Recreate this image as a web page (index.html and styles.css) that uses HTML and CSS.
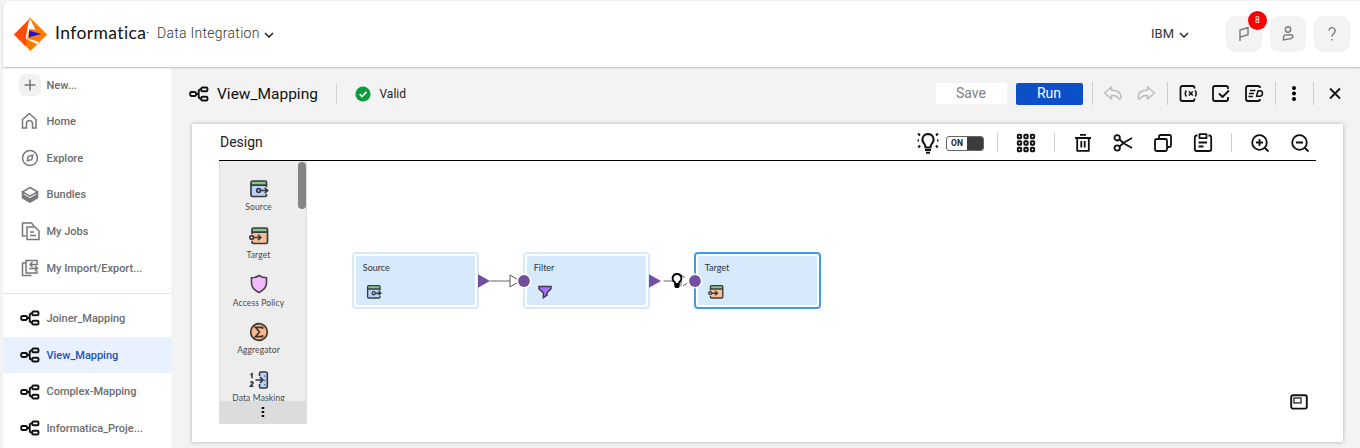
FILE: index.html
```html
<!DOCTYPE html>
<html lang="en">
<head>
<meta charset="utf-8">
<title>Data Integration</title>
<link rel="stylesheet" href="styles.css">
</head>
<body>
<svg class="defs" aria-hidden="true">
  <symbol id="mapping" viewBox="0 0 20 16"><g fill="none" stroke="currentColor" stroke-width="1.9"><rect x="1.200" y="6" width="5.800" height="4" rx="1.200"/><rect x="12.200" y="1.500" width="6.300" height="3.800" rx="1.300"/><rect x="12.200" y="10.700" width="6.300" height="3.800" rx="1.300"/><path d="M7 8h2.700M12 3.400h-.3q-2 0-2 2v5.200q0 2 2 2h.3"/></g></symbol>
  <symbol id="source" viewBox="0 0 20 20"><rect x="2" y="2" width="15.500" height="15.500" rx="2" fill="#b9d2f8"/><path d="M2 6V3.500Q2 2 3.500 2H16q1.500 0 1.500 1.500V6z" fill="#83c983"/><g fill="none" stroke="#383b40" stroke-width="1.700"><path d="M17.500 8V3.500Q17.500 2 16 2H3.500Q2 2 2 3.500V16q0 1.500 1.500 1.500H16q1.500 0 1.500-1.500v-1M2 6.200h15.500M11.500 11.500h7M15.800 8.800l2.800 2.700-2.800 2.700"/><circle cx="9.600" cy="11.500" r="1.900"/></g></symbol>
  <symbol id="target" viewBox="0 0 20 20"><rect x="3" y="2" width="15.500" height="15.500" rx="2" fill="#f9bd94"/><path d="M3 6V3.500Q3 2 4.500 2H17q1.500 0 1.500 1.500V6z" fill="#83c983"/><g fill="none" stroke="#383b40" stroke-width="1.700"><path d="M3 8V3.500Q3 2 4.500 2H17q1.500 0 1.500 1.500V16q0 1.500-1.500 1.500H4.500Q3 17.500 3 16v-1M3 6.200h15.500M4.500 11.500h7M9 8.800l2.800 2.700L9 14.200"/><circle cx="2.700" cy="11.500" r="1.800"/></g></symbol>
  <symbol id="bulb" viewBox="0 0 12 16"><path d="M6 1a4.300 4.300 0 0 0-2.700 7.700q.9.900.9 2.300h3.600q0-1.400.9-2.300A4.300 4.300 0 0 0 6 1z" fill="#fff" stroke="#000" stroke-width="1.800"/><path d="M3.400 11h5.200v2.500L7.500 15h-3l-1.100-1.500z"/></symbol>
</svg>

<header class="header">
  <svg class="logo" viewBox="0 0 34 34"><path d="M17 0L34 17 17 34 0 17z" fill="#ff7a00"/><path d="M17 0L0 17l12 12 4-29z" fill="#ff4b0b"/><path d="M17 1l5 11-6-1-2.500 10L25.500 24.500 24 27 12 21 15 4z" fill="#fff"/><path d="M15.500 13L28 16.500 15.500 19.800z" fill="#1b13df"/></svg>
  <span class="brand">Informatica<span class="mark">·</span></span>
  <span class="product">Data Integration</span>
  <svg class="chevron" viewBox="0 0 10 6"><path d="M1 1l4 4 4-4"/></svg>
  <span class="org">IBM</span>
  <svg class="chevron" viewBox="0 0 10 6"><path d="M1 1l4 4 4-4"/></svg>
  <div class="actions">
    <div class="action"><svg viewBox="0 0 20 20"><path d="M6 17V6l8-2.500v7.200L6 13.200"/></svg><span class="badge">8</span></div>
    <div class="action"><svg viewBox="0 0 20 20"><circle cx="10" cy="5.500" r="2.700"/><path d="M5.500 16v-2.500q0-2.300 2.500-2.600l4.500-.3q2.500 0 2.300 2-.2 1.400-1.800 2z"/></svg></div>
    <div class="action"><svg viewBox="0 0 20 20"><path d="M7 6.300a3.100 3.100 0 1 1 5.200 2.700Q10 10.500 10 12.700M10 15v1.600"/></svg></div>
  </div>
</header>

<div class="body">
  <nav class="sidebar">
    <div class="side-group">
      <div class="item"><span class="plus"><svg viewBox="0 0 20 20"><path d="M10 4.500v11M4.500 10h11"/></svg></span>New...</div>
      <div class="item"><svg viewBox="0 0 20 20"><path d="M2.500 17V8.500L9.300 2.500l6.700 6V17h-3.500v-4.500a3 3 0 0 0-6 0V17z"/></svg>Home</div>
      <div class="item"><svg viewBox="0 0 20 20"><circle cx="10" cy="10" r="7.500"/><path d="M7.300 12.700l1-4.400 4.400-1-1 4.400z"/></svg>Explore</div>
      <div class="item"><svg viewBox="0 0 20 20"><path d="M10 2.500l7.500 4.300L10 11.200 2.500 6.800zM2.500 7v2.600l7.500 4.300 7.500-4.300V7M2.500 9.600v3.200l7.500 4.400 7.500-4.400V9.600M2.500 11.200l7.500 4.300 7.500-4.300"/></svg>Bundles</div>
      <div class="item"><svg viewBox="0 0 20 20"><path d="M6 15H2.500V2h9l2.500 3M7 6h8l4 4v8.500H7zM10 11h4M10 14.500h6"/></svg>My Jobs</div>
      <div class="item"><svg viewBox="0 0 20 20"><path d="M5.500 5h-3v12.500h9M17 5.500V2.500H6v12.500h11v-2M9.500 6.500H18M12.500 4L10 6.500 12.500 9M9 10.500h8.500M15 8l2.500 2.500L15 13"/></svg>My Import/Export...</div>
    </div>
    <div class="side-group recent">
      <div class="item"><svg class="map-icon"><use href="#mapping"/></svg>Joiner_Mapping</div>
      <div class="item selected"><svg class="map-icon"><use href="#mapping"/></svg>View_Mapping</div>
      <div class="item"><svg class="map-icon"><use href="#mapping"/></svg>Complex-Mapping</div>
      <div class="item"><svg class="map-icon"><use href="#mapping"/></svg>Informatica_Proje...</div>
    </div>
  </nav>

  <main class="main">
    <div class="titlebar">
      <svg class="map-icon"><use href="#mapping"/></svg>
      <h1 class="title">View_Mapping</h1>
      <i class="title-divider"></i>
      <svg class="valid-icon" viewBox="0 0 16 16"><circle cx="8" cy="8" r="7.600" fill="#0b9b3c"/><path d="M4.700 8.200l2.300 2.300 4.500-4.600" fill="none" stroke="#fff" stroke-width="1.700"/></svg>
      <span class="valid">Valid</span>
      <button class="btn save">Save</button>
      <button class="btn run">Run</button>
      <div class="tools">
        <i class="divider"></i>
        <svg class="tool muted" viewBox="0 0 20 20"><path d="M8.500 3L1.500 9l7 6v-3.500q5.500-.5 8 4 1.500-1 1.500-3-.5-6-9.500-6.500z"/></svg>
        <svg class="tool muted" viewBox="0 0 20 20"><path d="M11.500 3l7 6-7 6v-3.500q-5.500-.5-8 4-1.500-1-1.500-3 .5-6 9.500-6.500z"/></svg>
        <i class="divider"></i>
        <svg class="tool" viewBox="0 0 20 20"><path d="M16.500 4.500V4q0-2-2-2H4.500q-2 0-2 2v11q0 2 2 2h10q2 0 2-2v-.5"/><path class="thin" d="M8.300 6.500q-2 3 0 6M17.200 6.500q2 3 0 6M10.800 7.500l4 4M14.800 7.500l-4 4"/></svg>
        <svg class="tool" viewBox="0 0 20 20"><path d="M17 5V4q0-2-2-2H4Q2 2 2 4v11q0 2 2 2h11q2 0 2-2v-2M8 9.500l3.500 3.500 6.500-6.500"/></svg>
        <svg class="tool" viewBox="0 0 20 20"><path d="M16 4q0-2-2-2H4Q2 2 2 4v11q0 2 2 2h10q2 0 2-2"/><path class="thin" d="M6 6.500h5.500M5 9.500h5M4.500 12.500h4.500M14 6.800H16q2.500 0 2.500 2.700T15.500 12.300h-3z"/></svg>
        <i class="divider"></i>
        <svg class="tool dots" viewBox="0 0 20 20"><circle cx="10" cy="4" r="2"/><circle cx="10" cy="9.500" r="2"/><circle cx="10" cy="15" r="2"/></svg>
        <i class="divider"></i>
        <svg class="tool close" viewBox="0 0 20 20"><path d="M5 4.500l10 10M15 4.500L5 14.500"/></svg>
      </div>
    </div>

    <section class="panel">
      <div class="panel-head">
        <h2 class="panel-title">Design</h2>
        <svg class="hint" viewBox="0 0 22 22"><path d="M11 2a5.600 5.600 0 0 0-4 9.500Q8.500 13 8.500 15.500h5q0-2.500 1.500-4A5.600 5.600 0 0 0 11 2zM8 18h6M9 20.800h4M1 1.500l2 2M21 1.500l-2 2M.5 8.500H2M20 8.500h1.500M1.200 15.500l2-2M20.800 15.500l-2-2"/></svg>
        <span class="toggle"><b class="toggle-text">ON</b><i class="knob"></i></span>
        <div class="tools wide">
          <i class="divider"></i>
          <svg class="tool grid-icon" viewBox="0 0 20 20"><rect x="1.800" y="1.800" width="3.400" height="3.400" rx=".8"/><rect x="8.300" y="1.800" width="3.400" height="3.400" rx=".8"/><rect x="14.800" y="1.800" width="3.400" height="3.400" rx=".8"/><rect x="1.800" y="8.300" width="3.400" height="3.400" rx=".8"/><rect x="8.300" y="8.300" width="3.400" height="3.400" rx=".8"/><rect x="14.800" y="8.300" width="3.400" height="3.400" rx=".8"/><rect x="1.800" y="14.800" width="3.400" height="3.400" rx=".8"/><rect x="8.300" y="14.800" width="3.400" height="3.400" rx=".8"/><rect x="14.800" y="14.800" width="3.400" height="3.400" rx=".8"/></svg>
          <i class="divider"></i>
          <svg class="tool" viewBox="0 0 20 20"><path d="M7 1.800h6M2 5h16M4.200 5v12.800h11.600V5M8.300 8v6.500M11.700 8v6.500"/></svg>
          <svg class="tool" viewBox="0 0 20 20"><circle cx="4.200" cy="4.800" r="2.700"/><circle cx="4.200" cy="15" r="2.700"/><path d="M6.500 6.500l4.500 4 8 4.500M6.500 13.500L11 9.500l8-4.500"/></svg>
          <svg class="tool" viewBox="0 0 20 20"><rect x="2" y="6" width="12" height="12" rx="1.500"/><path d="M6 5.500V3.500Q6 2 7.500 2h9Q18 2 18 3.500v9q0 1.500-1.500 1.500H14.500"/></svg>
          <svg class="tool" viewBox="0 0 20 20"><path d="M4.500 2.500H3.500Q1.800 2.500 1.800 4.500V16q0 2 2 2h12.400q2 0 2-2V4.500q0-2-1.700-2h-1M6.500 1.200h7v4h-7zM5.500 9.500h8.500M5.500 13.500h5"/></svg>
          <i class="divider"></i>
          <svg class="tool" viewBox="0 0 20 20"><circle cx="9.500" cy="9.500" r="7.300"/><path d="M15 15l3.500 3.500M9.500 6v7M6 9.500h7"/></svg>
          <svg class="tool" viewBox="0 0 20 20"><circle cx="9.500" cy="9.500" r="7.300"/><path d="M15 15l3.500 3.500M6 9.500h7"/></svg>
        </div>
      </div>
      <div class="workspace">
        <aside class="palette">
          <div class="palette-list">
            <div class="entry"><svg><use href="#source"/></svg>Source</div>
            <div class="entry"><svg><use href="#target"/></svg>Target</div>
            <div class="entry"><svg viewBox="0 0 20 20"><path d="M10 1.500q3.500 2.300 7.500 2.300v5q0 6-7.500 9.700Q2.500 14.800 2.500 8.800v-5q4 0 7.500-2.300z" fill="#f3bafb" stroke="#444" stroke-width="1.600"/></svg>Access Policy</div>
            <div class="entry"><svg viewBox="0 0 20 20"><circle cx="10" cy="10" r="8.300" fill="#f9b68d" stroke="#41362f" stroke-width="1.700"/><path d="M13.500 7V5.300h-7l4 4.700-4 4.700h7V13" fill="none" stroke="#41362f" stroke-width="1.700"/></svg>Aggregator</div>
            <div class="entry"><svg viewBox="0 0 20 20"><rect x="10.500" y="2" width="7.800" height="16" rx="1.500" fill="#b9d2f8"/><path d="M10.500 6V3.500q0-1.500 1.500-1.500h4.800q1.500 0 1.500 1.500v13q0 1.500-1.500 1.500H12q-1.500 0-1.500-1.500V14M6.500 10h7M11 7l3 3-3 3M1.500 4.800l1.500-1v4.500M1.300 12.500q2.700-1.700 2.700.5L1.500 16.200H4.500" fill="none" stroke="#353b45" stroke-width="1.600"/><path d="M15.800 5.500v10" stroke="#353b45" stroke-dasharray="1.300 3"/></svg>Data Masking</div>
          </div>
          <i class="scroll-thumb"></i>
          <div class="palette-foot"><svg viewBox="0 0 4 12"><path d="M.7 1h2.500v2H.7zM.7 5h2.500v2H.7zM.7 9h2.500v2H.7z"/></svg></div>
        </aside>
        <div class="canvas">
          <div class="node node-source"><div class="node-body"><span>Source</span><svg><use href="#source"/></svg></div></div>
          <div class="node node-filter"><div class="node-body"><span>Filter</span><svg viewBox="0 0 20 20"><path d="M2.500 3h15v3L12.500 11v3L8 17v-6L2.500 6z" fill="#a970fb" stroke="#403b4a" stroke-width="1.900"/></svg></div></div>
          <div class="node node-target"><div class="node-body"><span>Target</span><svg><use href="#target"/></svg></div></div>
          <svg class="link link-a" viewBox="0 0 56 18"><path d="M13 9h20" stroke="#666"/><path d="M33 3l10 6-10 6z" fill="#fff" stroke="#555"/><path d="M1 2.300L13 9 1 15.700z" fill="#71509f"/><circle cx="47" cy="9" r="7.500" fill="#fff"/><circle cx="47" cy="9" r="5.900" fill="#71509f"/></svg>
          <svg class="link link-b" viewBox="0 0 56 18"><path d="M15.500 9h17" stroke="#666"/><path d="M33 3l10 6-10 6z" fill="#fff" stroke="#666" stroke-dasharray="5 3"/><path d="M1 2.300L13 9 1 15.700z" fill="#71509f"/><circle cx="47" cy="9" r="7.500" fill="#fff"/><circle cx="47" cy="9" r="5.900" fill="#71509f"/></svg>
          <svg class="link-bulb"><use href="#bulb"/></svg>
          <svg class="overview" viewBox="0 0 18 16"><rect x="1.200" y="1.200" width="15.600" height="13.400" rx="1.800" fill="none" stroke="#111" stroke-width="1.900"/><rect x="4" y="4" width="7" height="5" fill="none" stroke="#333" stroke-width="1.400"/></svg>
        </div>
      </div>
    </section>
  </main>
</div>
</body>
</html>
```
FILE: styles.css
```css
* { box-sizing: border-box; }
body { margin: 0; width: 1360px; height: 448px; overflow: hidden; padding: 1px 0 0 3px; background: #f3f3f3; color: #222; font-family: Roboto, sans-serif; display: flex; flex-direction: column; }
svg { display: block; flex: none; }
h1, h2 { margin: 0; font-weight: 400; }
.defs { position: absolute; width: 0; height: 0; }

.header { position: relative; z-index: 1; flex: none; display: flex; align-items: center; height: 66px; padding: 0 10px 1px 11px; background: #fff; border-radius: 8px 0 0 0; box-shadow: 0 1px 2px #bbb; }
.logo { width: 33px; height: 33px; margin-top: 1px; }
.brand { width: 93px; margin: -2px 0 0 8px; font: 400 17.500px Lato, sans-serif; letter-spacing: .4px; color: #111; white-space: nowrap; }
.mark { font-size: 9px; letter-spacing: 0; vertical-align: 4px; }
.product { width: 104px; margin: -1px 0 0 9px; font-size: 14px; font-weight: 300; letter-spacing: .28px; color: #333; white-space: nowrap; }
.chevron { width: 10px; height: 6px; margin: 2px 0 0 3px; fill: none; stroke: #222; stroke-width: 1.500; }
.org { margin-left: auto; font-size: 13px; color: #333; }
.org + .chevron { margin-left: 5px; }
.actions { display: flex; gap: 8px; margin: 1px 0 0 37px; }
.action { position: relative; display: grid; place-items: center; width: 36px; height: 36px; border-radius: 9px; background: #f3f3f3; }
.action svg { width: 20px; height: 20px; fill: none; stroke: #777; stroke-width: 1.400; }
.badge { position: absolute; top: -5px; right: -5px; width: 19px; height: 19px; border-radius: 50%; background: #f00; color: #fff; font-size: 8.500px; line-height: 19px; text-align: center; }

.body { flex: 1; display: flex; min-height: 0; }
.sidebar { flex: none; width: 168px; background: #fff; overflow: hidden; }
.side-group { height: 227px; border-bottom: 1px solid #e2e2e2; }
.recent { padding-top: 6px; height: auto; border: 0; }
.item { display: flex; align-items: center; height: 36.700px; padding-left: 17px; font-size: 11px; font-weight: 500; letter-spacing: -.02px; color: #6c6c6c; white-space: nowrap; }
.side-group:not(.recent) .item:first-child { height: 36px; }
.item svg { width: 20px; height: 20px; margin-right: 6.500px; fill: none; stroke: #777; stroke-width: 1.500; }
.plus { display: grid; place-items: center; width: 22px; height: 22px; margin: 0 5.500px 0 -1px; border-radius: 6px; background: #f1f1f1; }
.item .plus svg { margin: 0; }
.item .map-icon { width: 20px; height: 16px; color: #111; stroke: none; }
.map-icon { width: 20px; height: 16px; color: #111; }
.item.selected { background: #eaf1fe; color: #1d50b8; }

.main { flex: 1; min-width: 0; padding: 5px 17px 6px 21px; display: flex; flex-direction: column; }
.titlebar { flex: none; display: flex; align-items: center; height: 43px; margin: 0 -2px 9px -3px; }
.title { width: 102px; margin-left: 8px; font-size: 15.500px; color: #111; white-space: nowrap; }
.title-divider { width: 1px; height: 20px; margin: 0 18px 0 17px; background: #d2d2d2; }
.valid-icon { width: 16px; height: 16px; }
.valid { margin-left: 8.500px; font-size: 12px; }
.btn { border: 0; padding: 0 0 1px; font: 14px Roboto, sans-serif; }
.save { width: 71px; height: 21px; margin-left: auto; background: #fff; color: #808080; }
.run { width: 67px; height: 22px; margin: 0 5px 0 9px; border-radius: 2px; background: #0b50c8; color: #fff; }
.tools { display: flex; align-items: center; }
.tool { width: 20px; height: 20px; margin: 0 6.500px; fill: none; stroke: #111; stroke-width: 1.800; stroke-linejoin: round; }
.thin { stroke-width: 1.500; }
.divider { width: 1px; height: 23px; margin: 0 4px; background: #ccc; }
.muted { stroke: #bbb; stroke-width: 1.500; }
.dots { margin: 0 4.500px; fill: #000; stroke: none; }
.close { margin: 0 0 0 7.500px; }

.panel { flex: 1; min-height: 0; display: flex; flex-direction: column; padding: 0 27px 18px; background: #fff; box-shadow: 0 0 4px #aaa; }
.panel-head { flex: none; display: flex; align-items: center; height: 37px; padding-top: 1px; border-bottom: 1px solid #000; }
.panel-title { margin: -1px auto 0 1px; font-size: 14px; letter-spacing: 0; color: #222; }
.hint { width: 22px; height: 22px; margin-right: 7px; fill: none; stroke: #111; stroke-width: 1.900; }
.toggle { display: flex; width: 38px; height: 15px; margin: 2px 5px 0 0; overflow: hidden; border: 1px solid #666; border-radius: 3px; background: #fff; }
.toggle-text { width: 20px; font-size: 8.500px; line-height: 13px; text-align: center; }
.knob { flex: 1; background: #3c3c3c; }
.wide .tool { margin: 0 10px; }
.wide .tool:last-child { margin-right: 6px; }
.wide .divider { height: 19px; margin: 0 8px; }
.grid-icon { stroke-width: 1.900; }

.workspace { flex: 1; min-height: 0; display: flex; }
.palette { position: relative; flex: none; display: flex; flex-direction: column; width: 88px; border: 1px solid #ddd; border-top: 0; background: #ededed; }
.palette-list { flex: 1; min-height: 0; overflow: hidden; padding-top: 17.500px; }
.entry { display: flex; flex-direction: column; align-items: center; gap: 2.500px; height: 47.800px; width: 77px; font: 8.500px/12px Lato, sans-serif; letter-spacing: .12px; color: #484848; white-space: nowrap; }
.entry svg { width: 20px; height: 20px; }
.scroll-thumb { position: absolute; top: 1px; right: 0; width: 8px; height: 47px; border-radius: 4px; background: #858585; }
.palette-foot { flex: none; display: grid; place-items: center; height: 22px; background: #dcdcdc; }
.palette-foot svg { width: 4px; height: 12px; }
.canvas { position: relative; flex: 1; }
.node { position: absolute; top: 91px; width: 127px; height: 57px; padding: 2px; border: 2px solid #d6eafb; border-radius: 4px; background: #fff; }
.node-body { height: 100%; padding: 5px 6.500px; border-radius: 2px; background: #d6eafb; font: 9px/13px Lato, sans-serif; color: #333; }
.node-body svg { width: 16px; height: 16px; margin: 10px 0 0 3.500px; }
.node-source { left: 45.300px; }
.node-filter { left: 216.300px; }
.node-target { left: 387.300px; border-color: #4599e9; }
.link { position: absolute; top: 111px; width: 56px; height: 18px; }
.link-a { left: 170px; }
.link-b { left: 341px; }
.link-bulb { position: absolute; left: 364px; top: 112px; width: 12px; height: 16px; }
.overview { position: absolute; left: 983px; top: 232.500px; width: 18px; height: 16px; }
```
